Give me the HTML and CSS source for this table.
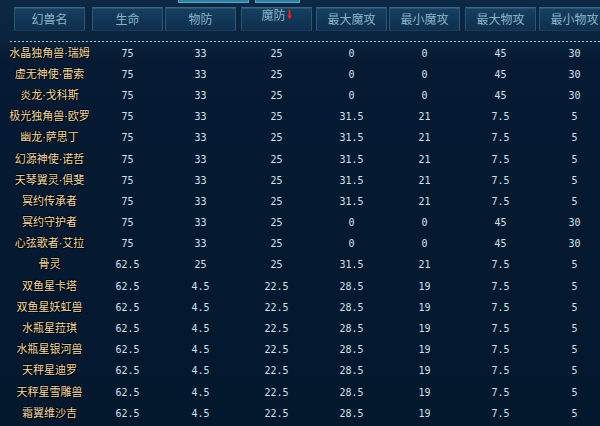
FILE: index.html
```html
<!DOCTYPE html>
<html lang="zh">
<head>
<meta charset="utf-8">
<title>幻兽属性</title>
<link rel="stylesheet" href="styles.css">
</head>
<body>
<div class="page">
  <div class="tabs"><span class="tab tab-a"></span><span class="tab tab-b"></span></div>
  <div class="grid head">
    <div class="cell"><div class="btn">幻兽名</div></div>
    <div class="cell"><div class="btn">生命</div></div>
    <div class="cell"><div class="btn">物防</div></div>
    <div class="cell"><div class="btn btn-sorted">魔防<svg class="arrow" width="5" height="9" viewBox="0 0 5 9"><path d="M1.6 0h1.8v5.5H5L2.5 9 0 5.5h1.6z" fill="#f01e1e"/></svg></div></div>
    <div class="cell"><div class="btn">最大魔攻</div></div>
    <div class="cell"><div class="btn">最小魔攻</div></div>
    <div class="cell"><div class="btn">最大物攻</div></div>
    <div class="cell"><div class="btn">最小物攻</div></div>
  </div>
  <div class="rule"></div>
  <div class="rows">
    <div class="grid row"><div class="cell name">水晶独角兽·瑞姆</div><div class="cell num">75</div><div class="cell num">33</div><div class="cell num">25</div><div class="cell num">0</div><div class="cell num">0</div><div class="cell num">45</div><div class="cell num">30</div></div>
    <div class="grid row"><div class="cell name">虚无神使·雷索</div><div class="cell num">75</div><div class="cell num">33</div><div class="cell num">25</div><div class="cell num">0</div><div class="cell num">0</div><div class="cell num">45</div><div class="cell num">30</div></div>
    <div class="grid row"><div class="cell name">炎龙·戈科斯</div><div class="cell num">75</div><div class="cell num">33</div><div class="cell num">25</div><div class="cell num">0</div><div class="cell num">0</div><div class="cell num">45</div><div class="cell num">30</div></div>
    <div class="grid row"><div class="cell name">极光独角兽·欧罗</div><div class="cell num">75</div><div class="cell num">33</div><div class="cell num">25</div><div class="cell num">31.5</div><div class="cell num">21</div><div class="cell num">7.5</div><div class="cell num">5</div></div>
    <div class="grid row"><div class="cell name">幽龙·萨思丁</div><div class="cell num">75</div><div class="cell num">33</div><div class="cell num">25</div><div class="cell num">31.5</div><div class="cell num">21</div><div class="cell num">7.5</div><div class="cell num">5</div></div>
    <div class="grid row"><div class="cell name">幻源神使·诺哲</div><div class="cell num">75</div><div class="cell num">33</div><div class="cell num">25</div><div class="cell num">31.5</div><div class="cell num">21</div><div class="cell num">7.5</div><div class="cell num">5</div></div>
    <div class="grid row"><div class="cell name">天琴翼灵·俱斐</div><div class="cell num">75</div><div class="cell num">33</div><div class="cell num">25</div><div class="cell num">31.5</div><div class="cell num">21</div><div class="cell num">7.5</div><div class="cell num">5</div></div>
    <div class="grid row"><div class="cell name">冥约传承者</div><div class="cell num">75</div><div class="cell num">33</div><div class="cell num">25</div><div class="cell num">31.5</div><div class="cell num">21</div><div class="cell num">7.5</div><div class="cell num">5</div></div>
    <div class="grid row"><div class="cell name">冥约守护者</div><div class="cell num">75</div><div class="cell num">33</div><div class="cell num">25</div><div class="cell num">0</div><div class="cell num">0</div><div class="cell num">45</div><div class="cell num">30</div></div>
    <div class="grid row"><div class="cell name">心弦歌者·艾拉</div><div class="cell num">75</div><div class="cell num">33</div><div class="cell num">25</div><div class="cell num">0</div><div class="cell num">0</div><div class="cell num">45</div><div class="cell num">30</div></div>
    <div class="grid row"><div class="cell name">骨灵</div><div class="cell num">62.5</div><div class="cell num">25</div><div class="cell num">25</div><div class="cell num">31.5</div><div class="cell num">21</div><div class="cell num">7.5</div><div class="cell num">5</div></div>
    <div class="grid row"><div class="cell name">双鱼星卡塔</div><div class="cell num">62.5</div><div class="cell num">4.5</div><div class="cell num">22.5</div><div class="cell num">28.5</div><div class="cell num">19</div><div class="cell num">7.5</div><div class="cell num">5</div></div>
    <div class="grid row"><div class="cell name">双鱼星妖虹兽</div><div class="cell num">62.5</div><div class="cell num">4.5</div><div class="cell num">22.5</div><div class="cell num">28.5</div><div class="cell num">19</div><div class="cell num">7.5</div><div class="cell num">5</div></div>
    <div class="grid row"><div class="cell name">水瓶星菈琪</div><div class="cell num">62.5</div><div class="cell num">4.5</div><div class="cell num">22.5</div><div class="cell num">28.5</div><div class="cell num">19</div><div class="cell num">7.5</div><div class="cell num">5</div></div>
    <div class="grid row"><div class="cell name">水瓶星银河兽</div><div class="cell num">62.5</div><div class="cell num">4.5</div><div class="cell num">22.5</div><div class="cell num">28.5</div><div class="cell num">19</div><div class="cell num">7.5</div><div class="cell num">5</div></div>
    <div class="grid row"><div class="cell name">天秤星迪罗</div><div class="cell num">62.5</div><div class="cell num">4.5</div><div class="cell num">22.5</div><div class="cell num">28.5</div><div class="cell num">19</div><div class="cell num">7.5</div><div class="cell num">5</div></div>
    <div class="grid row"><div class="cell name">天秤星雪雕兽</div><div class="cell num">62.5</div><div class="cell num">4.5</div><div class="cell num">22.5</div><div class="cell num">28.5</div><div class="cell num">19</div><div class="cell num">7.5</div><div class="cell num">5</div></div>
    <div class="grid row"><div class="cell name">霜翼维沙吉</div><div class="cell num">62.5</div><div class="cell num">4.5</div><div class="cell num">22.5</div><div class="cell num">28.5</div><div class="cell num">19</div><div class="cell num">7.5</div><div class="cell num">5</div></div>
  </div>
</div>
</body>
</html>
```
FILE: styles.css
```css
html, body {
  margin: 0;
  padding: 0;
  background: #04182e;
}
.page {
  width: 600px;
  height: 426px;
  overflow: hidden;
  background: linear-gradient(to bottom, #0c2843 0px, #0a233b 40px, #061b33 60px, #03172d 426px);
  font-family: "Noto Sans CJK SC", "DejaVu Sans", sans-serif;
}
.tabs {
  display: flex;
  gap: 6px;
  height: 4px;
  padding-left: 178px;
}
.tab {
  display: block;
  height: 3px;
  background: #2f7fa3;
  border: 1px solid #5aa8c8;
  border-top: 0;
  box-sizing: border-box;
}
.tab-a { width: 71px; }
.tab-b { width: 45px; }
.grid {
  display: grid;
  grid-template-columns: 78px 73px 76px 75px 73px 76px 74px 75px;
  padding-left: 14px;
}
.head {
  margin-top: 3px;
  height: 24px;
}
.btn {
  width: 71px;
  height: 24px;
  box-sizing: border-box;
  border: 1px solid #2a5678;
  border-top-color: #36668c;
  border-bottom-color: #1a3a58;
  background: linear-gradient(to bottom, #17405f 0%, #123657 50%, #0f2f4e 100%);
  box-shadow: inset 0 1px 0 rgba(120, 170, 200, 0.18);
  color: #8ab5c8;
  font-size: 12px;
  line-height: 22px;
  text-align: center;
  white-space: nowrap;
}
.btn-sorted {
  line-height: 12px;
  padding-top: 1px;
  display: flex;
  justify-content: center;
  align-items: flex-start;
  gap: 1px;
}
.arrow {
  margin-top: 1px;
}
.rule {
  margin-top: 10px;
  margin-left: 10px;
  height: 1px;
  background: repeating-linear-gradient(to right, #a9c6d4 0px, #a9c6d4 2px, transparent 2px, transparent 4px);
}
.rows {
  padding-top: 1px;
}
.row {
  height: 21.2px;
  align-items: center;
}
.cell {
  width: 71px;
  text-align: center;
  white-space: nowrap;
}
.name {
  display: flex;
  justify-content: center;
  font-family: "DejaVu Sans", "Noto Sans CJK SC", sans-serif;
  font-size: 11px;
  color: #efdcae;
  text-shadow: 1px 1px 0 #000, -1px 0 0 #000, 0 -1px 0 #000;
  line-height: 14px;
}
.num {
  font-family: "DejaVu Sans Mono", "Liberation Mono", monospace;
  font-size: 10px;
  color: #cfe3ee;
  line-height: 14px;
}
```
